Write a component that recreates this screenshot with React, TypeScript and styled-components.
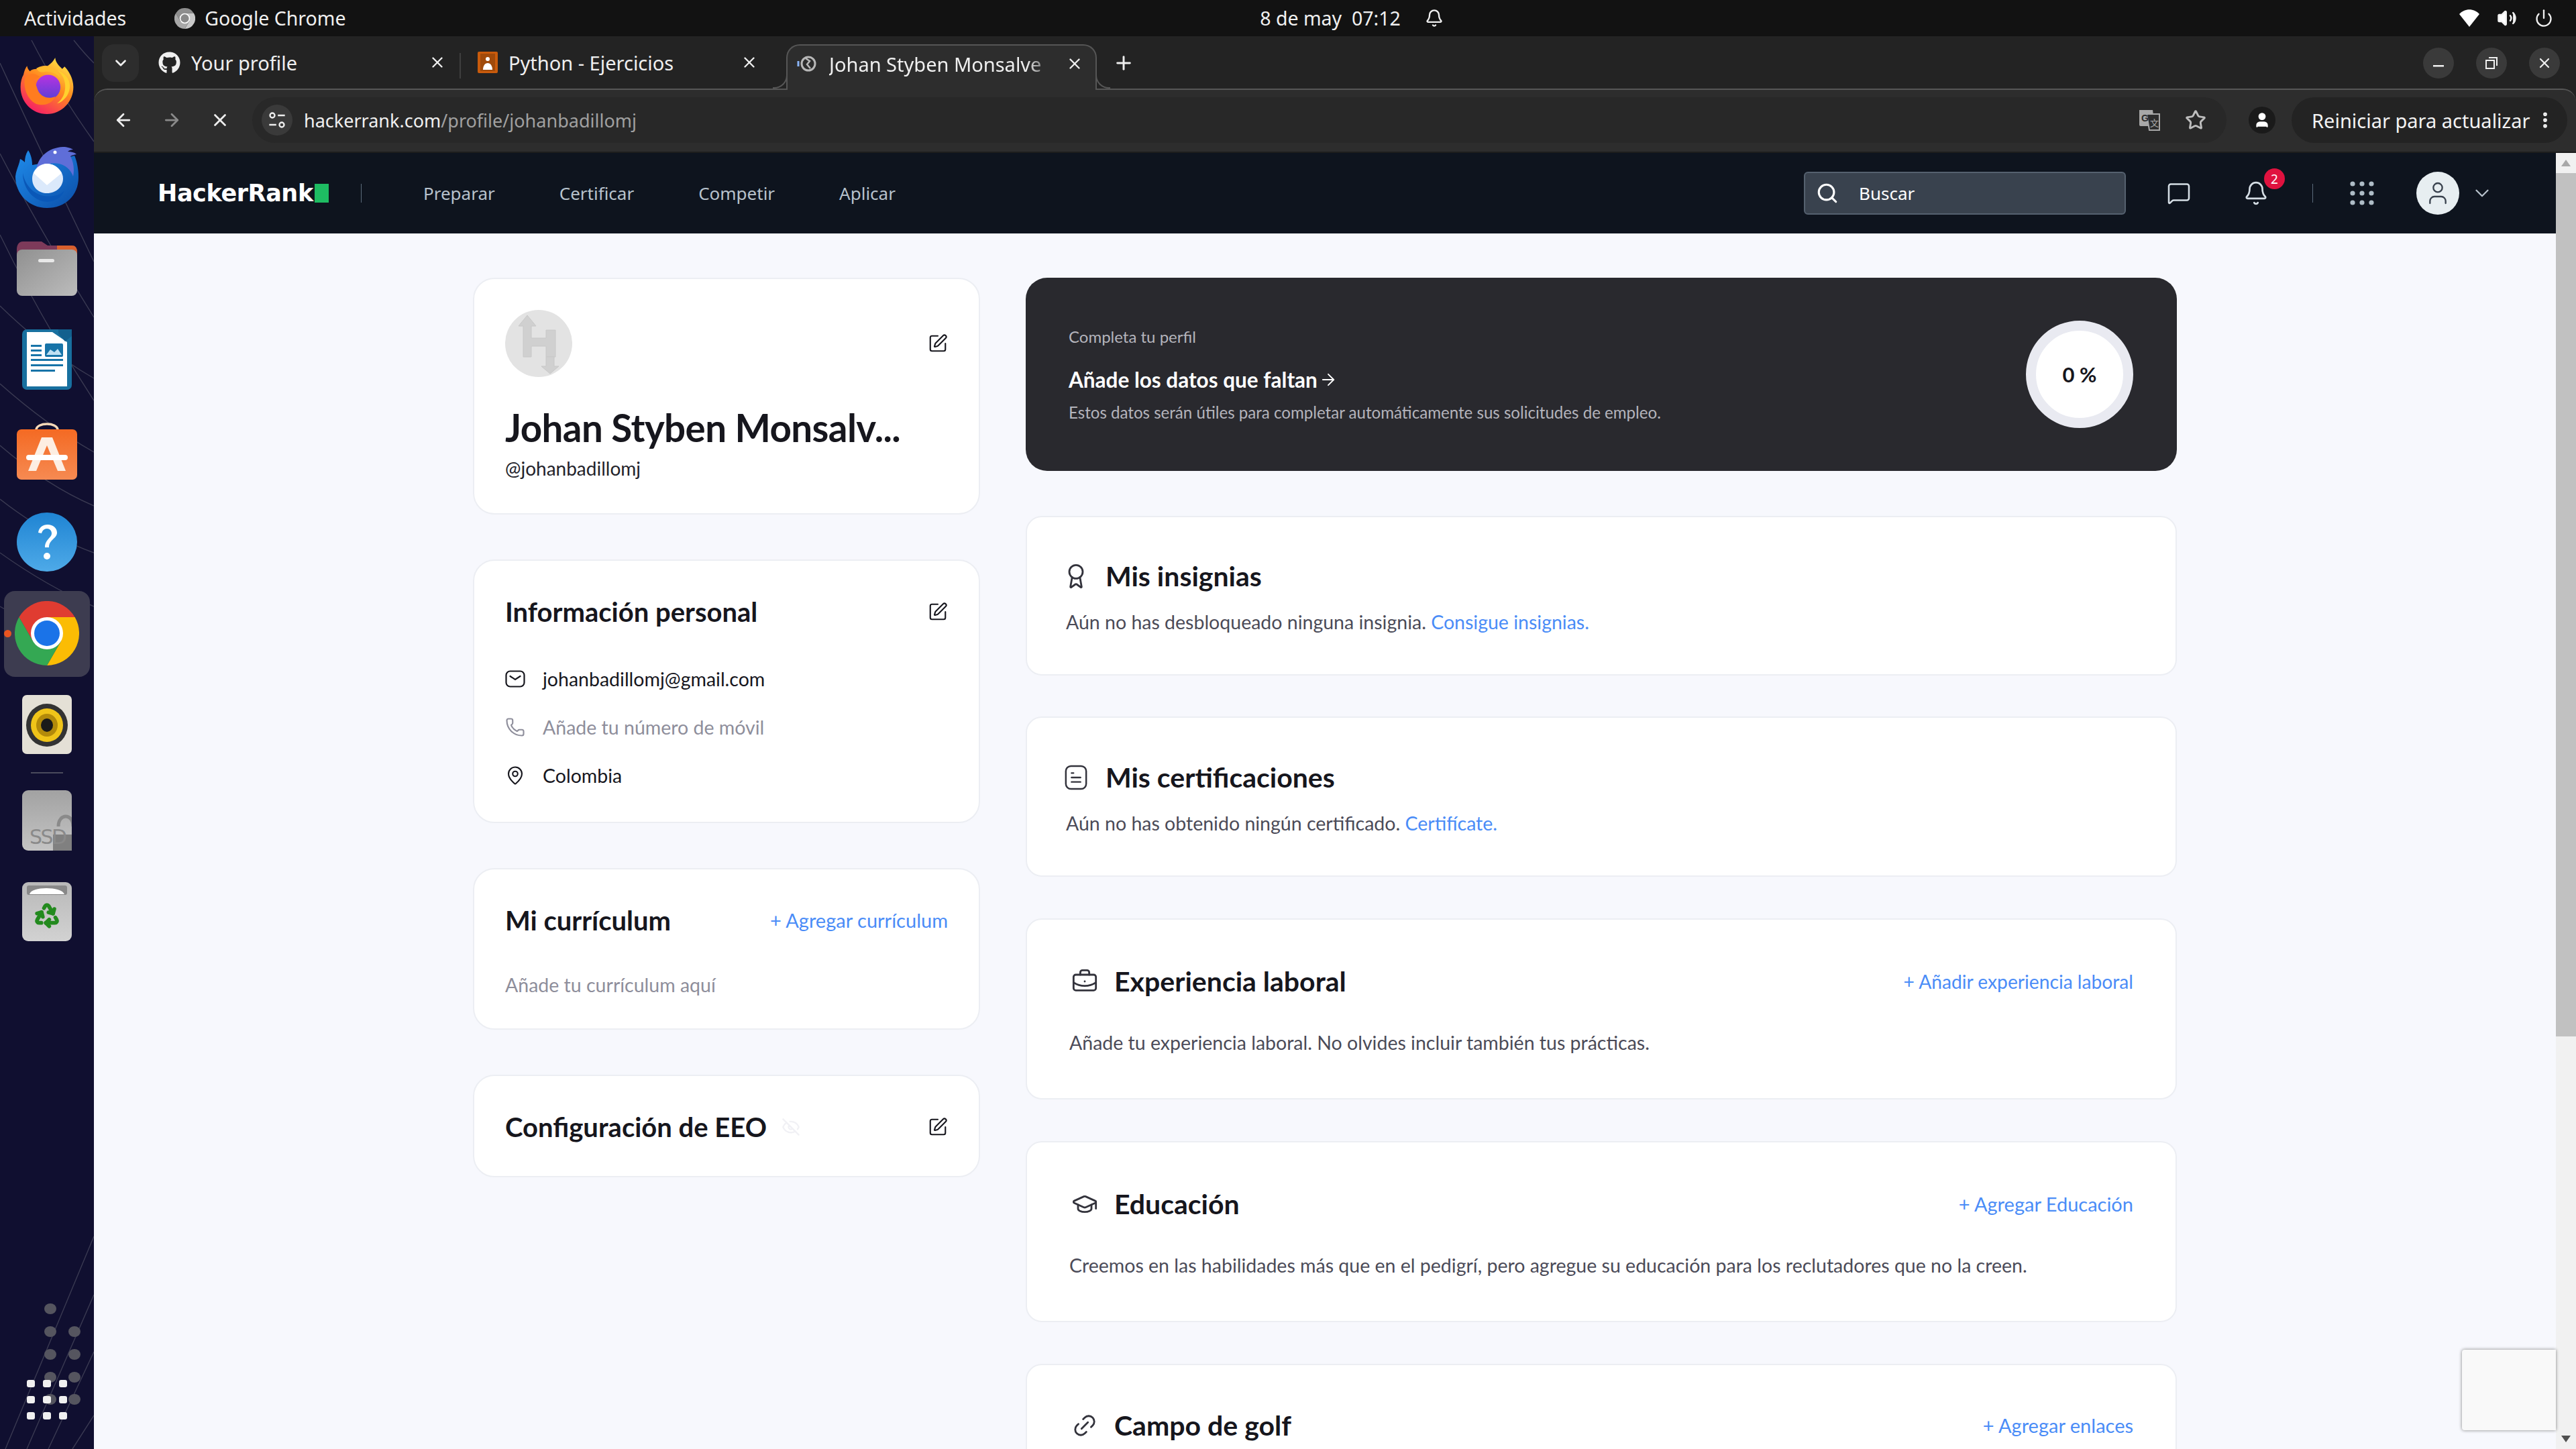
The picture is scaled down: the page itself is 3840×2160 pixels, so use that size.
import React from "react";
import styled, { createGlobalStyle } from "styled-components";
import { FaGithub } from "react-icons/fa";
import {
  ChevronDown, X, Plus, ArrowLeft, ArrowRight, Star, Volume2, Power, Search, MessageSquare, Bell,
  User, SquarePen, Phone, MapPin, Award, BriefcaseBusiness, GraduationCap, Link2, EyeOff, EllipsisVertical, Recycle,
} from "lucide-react";

const Global = createGlobalStyle`
  html, body { margin: 0; padding: 0; background: #121212; }
  * { box-sizing: border-box; }
`;

const Screen = styled.div`
  width: 3840px; height: 2160px; display: flex; flex-direction: column; overflow: hidden;
  font-family: "Noto Sans", sans-serif; position: relative;
`;
const TopBar = styled.header`
  height: 54px; flex: none; background: #121212; color: #f0f0f0; display: grid;
  grid-template-columns: 1fr auto 1fr; align-items: center; padding: 0 34px 0 36px; font-size: 28.5px;
`;
const TopLeft = styled.div`display: flex; align-items: center; gap: 72px;`;
const AppName = styled.div`display: flex; align-items: center; gap: 14px;`;
const Clock = styled.div`display: flex; align-items: center; gap: 36px; white-space: pre; margin-left: 188px;`;
const TopRight = styled.div`display: flex; justify-content: flex-end; align-items: center; gap: 26px;`;

const Body = styled.div`flex: 1; display: flex; min-height: 0;`;
const Dock = styled.nav`
  width: 140px; flex: none; background: #100f30; display: flex; flex-direction: column; align-items: center;
  padding: 6px 0 44px; position: relative; overflow: hidden;
`;
const DockItem = styled.div<{ $active?: boolean }>`
  width: 128px; height: 136px; flex: none; display: flex; align-items: center; justify-content: center; position: relative; z-index: 1;
  ${p => p.$active && `
    &::before { content: ""; position: absolute; left: 0; right: 0; top: 5px; bottom: 3px; border-radius: 16px; background: #3d3c50; }
    &::after { content: ""; position: absolute; left: 0; top: 63px; width: 11px; height: 11px; border-radius: 50%; background: #e95420; }
    & > svg { position: relative; }
  `}
`;
const DockSeparator = styled.div`width: 48px; height: 2px; flex: none; background: #4a4a5c; margin: 3px 0 2px; z-index: 1;`;
const DockGrid = styled.div`
  margin-top: auto; display: grid; grid-template-columns: repeat(3, 12px); grid-auto-rows: 11px; column-gap: 12px; row-gap: 13px; z-index: 1;
`;
const DockDot = styled.span`background: #f0f0f0; border-radius: 3px;`;
const Wallpaper = styled.svg`position: absolute; left: 0; top: 0; width: 140px; height: 2106px;`;

const Window = styled.div`flex: 1; min-width: 0; display: flex; flex-direction: column; background: #232323;`;
const TabStrip = styled.div`
  height: 78px; flex: none; display: flex; align-items: flex-end; padding-left: 12px; position: relative; z-index: 2; color: #efefef; font-size: 29px;
`;
const TabMenu = styled.div`
  width: 55px; height: 56px; background: #2d2d2d; border-radius: 18px; display: flex; align-items: center; justify-content: center; margin: 0 22px 10px 0; color: #eee;
`;
const Tab = styled.div<{ $w: number }>`
  width: ${p => p.$w}px; height: 66px; padding: 0 20px 12px 7px; display: flex; align-items: center; gap: 16px; flex: none;
`;
const TabDivider = styled.div`width: 2px; height: 38px; background: #3f3f3f; margin: 0 18px 15px 0;`;
const TabTitle = styled.span`flex: 1; white-space: nowrap; overflow: hidden;`;
const ActiveTabTitle = styled(TabTitle)`
  -webkit-mask-image: linear-gradient(to right, #000 88%, transparent 100%); mask-image: linear-gradient(to right, #000 88%, transparent 100%);
`;
const ActiveTab = styled.div`
  width: 463px; height: 68px; margin-left: 22px; flex: none; background: #2d2d2d; border: solid #565656; border-width: 2px 2px 0;
  border-radius: 20px 20px 0 0; display: flex; align-items: center; gap: 18px; padding: 0 18px 12px 12px; position: relative; margin-bottom: -2px;
  &::before, &::after { content: ""; position: absolute; bottom: 2px; width: 20px; height: 20px; border: solid #565656; border-width: 0 0 2px 0; background: #232323; }
  &::before { left: -22px; border-right-width: 2px; border-bottom-right-radius: 20px; }
  &::after { right: -22px; border-left-width: 2px; border-bottom-left-radius: 20px; }
`;
const NewTab = styled.div`margin: 0 0 22px 24px; color: #eee; display: flex;`;
const WindowControls = styled.div`margin: 0 24px 15px auto; display: flex; gap: 33px;`;
const WinButton = styled.div`
  width: 46px; height: 46px; border-radius: 50%; background: #3a3a3a; color: #f0f0f0; display: flex; align-items: center; justify-content: center;
`;
const Toolbar = styled.div`
  height: 96px; flex: none; background: #2d2d2d; border-top: 2px solid #565656; border-radius: 20px 20px 0 0; display: flex; align-items: center;
  padding: 0 13px 2px 29px; color: #eee; border-bottom: 2px solid #1d1d1d;
`;
const NavIcons = styled.div`display: flex; align-items: center; gap: 42px; margin-right: 33px;`;
const Omnibox = styled.div`
  flex: 1; height: 68px; border-radius: 34px; background: #282828; display: flex; align-items: center; padding: 0 30px 0 14px;
`;
const SiteInfo = styled.div`
  width: 46px; height: 46px; border-radius: 50%; background: #3a3a3a; display: flex; align-items: center; justify-content: center; flex: none; margin-right: 17px;
`;
const Url = styled.div`flex: 1; font-size: 27px; color: #f0f0f0;`;
const UrlRest = styled.span`color: #a0a0a0;`;
const OmniIcons = styled.div`display: flex; align-items: center; gap: 36px;`;
const ProfileChip = styled.div`
  width: 40px; height: 40px; border-radius: 50%; background: #1a1a1a; display: flex; align-items: center; justify-content: center; margin: 0 24px 0 33px; flex: none;
`;
const RestartPill = styled.div`
  width: 411px; height: 68px; flex: none; border-radius: 34px; background: #232323; display: flex; align-items: center; justify-content: space-between;
  padding: 0 18px 0 30px; font-size: 29px; color: #f2f2f2;
`;

const ContentRow = styled.div`flex: 1; min-height: 0; display: flex; position: relative;`;
const ContentMain = styled.div`flex: 1; min-width: 0; display: flex; flex-direction: column;`;
const HrNav = styled.div`
  height: 120px; flex: none; background: #0e141e; display: flex; align-items: center; padding: 0 107px 0 95px; color: #b7c2cc; font-size: 26px;
`;
const Logo = styled.div`
  display: flex; align-items: center; font-family: "DejaVu Sans", sans-serif; font-weight: 700; font-size: 35px; color: #fff; width: 303px; letter-spacing: -0.4px;
`;
const LogoMark = styled.span`width: 21px; height: 28px; background: #1ebc62; margin-left: 2px;`;
const NavDivider = styled.div`width: 1px; height: 28px; background: #5b6b7b; flex: none;`;
const NavLinks = styled.div`display: flex; margin-left: 92px; gap: 96px;`;
const SearchBox = styled.div`
  width: 480px; height: 64px; margin-left: auto; background: #39424e; border: 2px solid #55616f; border-radius: 6px; display: flex; align-items: center;
  padding: 0 0 0 16px; gap: 30px; color: #fff; font-size: 26px;
`;
const NavIconSlot = styled.div<{ $w: number; $ml?: number }>`
  width: ${p => p.$w}px; margin-left: ${p => p.$ml ?? 0}px; display: flex; justify-content: center; align-items: center; position: relative; color: #d5dee5; flex: none;
  & > svg { flex: none; }
`;
const Badge = styled.span`
  position: absolute; left: 50%; margin-left: 12px; top: -18px; width: 31px; height: 31px; border-radius: 50%; background: #e0123f; color: #fff;
  font-size: 19px; display: flex; align-items: center; justify-content: center;
`;
const NavAvatar = styled.div`
  width: 64px; height: 64px; border-radius: 50%; background: #e7eef1; color: #39424e; display: flex; align-items: center; justify-content: center;
`;

const Page = styled.main`
  flex: 1; min-height: 0; background: #f7f8fd; overflow: hidden; display: grid; grid-template-columns: 756px 1716px; column-gap: 68px;
  align-content: start; padding: 66px 0 0 565px; font-family: Lato, sans-serif; color: #16161d;
`;
const Column = styled.div`display: flex; flex-direction: column; gap: 67px;`;
const RightColumn = styled.div`display: flex; flex-direction: column;`;
const Card = styled.section<{ $h: number }>`
  height: ${p => p.$h}px; flex: none; background: #fff; border: 2px solid #eceef3; border-radius: 32px; padding: 0 46px;
`;
const AvatarRow = styled.div`display: flex; justify-content: space-between; align-items: center; padding-top: 46px;`;
const Avatar = styled.div`width: 100px; height: 100px; border-radius: 50%; background: #e3e3e3; display: flex; align-items: center; justify-content: center;`;
const Name = styled.h1`margin: 40px 0 0; font-size: 56.5px; line-height: 70px; font-weight: 700; letter-spacing: -0.6px; white-space: nowrap;`;
const Handle = styled.div`font-size: 28px; line-height: 36px; margin-top: 8px; color: #23232b;`;
const CardHead = styled.div<{ $top: number }>`display: flex; justify-content: space-between; align-items: center; padding-top: ${p => p.$top}px; height: ${p => p.$top + 48}px;`;
const CardTitle = styled.h2<{ $size?: number; $gap?: number }>`
  margin: 0; font-size: ${p => p.$size ?? 40}px; line-height: 48px; font-weight: 700; display: flex; align-items: center; gap: ${p => p.$gap ?? 22}px; white-space: nowrap;
`;
const TitleIcon = styled.span<{ $w: number }>`
  width: ${p => p.$w}px; display: flex; justify-content: center; flex: none; color: #33333c;
  & > svg { flex: none; }
`;
const InfoList = styled.div`display: flex; flex-direction: column; gap: 32px; margin-top: 56px;`;
const InfoRow = styled.div<{ $muted?: boolean }>`
  display: flex; align-items: center; gap: 26px; font-size: 28.5px; line-height: 40px; color: ${p => (p.$muted ? "#8e8e9b" : "#16161d")};
`;
const AddLink = styled.a<{ $size?: number }>`color: #4a8cf7; font-size: ${p => p.$size ?? 29}px; line-height: 40px; white-space: nowrap;`;
const Muted = styled.p`margin: 52px 0 0; font-size: 28.5px; line-height: 40px; color: #8e8e9b;`;
const EditBtn = styled.span`display: flex; color: #16161d;`;
const Banner = styled.section`
  height: 288px; flex: none; background: #29292e; border-radius: 32px; display: flex; align-items: center; justify-content: space-between;
  padding: 0 65px 0 64px; margin-bottom: 67px; color: #fff;
`;
const BannerText = styled.div`display: flex; flex-direction: column;`;
const BannerEyebrow = styled.div`font-size: 24px; line-height: 32px; color: #b4b4bc;`;
const BannerTitle = styled.div`font-size: 31.5px; line-height: 44px; font-weight: 700; margin-top: 26px; display: flex; align-items: center; gap: 2px;`;
const BannerDesc = styled.div`font-size: 24.1px; line-height: 32px; color: #b4b4bc; margin-top: 11px;`;
const Ring = styled.div`
  width: 160px; height: 160px; border-radius: 50%; background: #fff; border: 15px solid #e9eaf1; color: #16161d; display: flex; align-items: center; justify-content: center;
  font-size: 31px; font-weight: 700;
`;
const Section = styled.section<{ $h: number; $mb: number; $px: number }>`
  height: ${p => p.$h}px; margin-bottom: ${p => p.$mb}px; flex: none; background: #fff; border: 2px solid #eceef3; border-radius: 24px; padding: 0 ${p => p.$px}px;
`;
const Paragraph = styled.p<{ $mt: number }>`
  margin: ${p => p.$mt}px 0 0; font-size: 28.5px; line-height: 40px; color: #4b4b58;
`;
const InlineLink = styled.a`color: #4a8cf7;`;
const Scrollbar = styled.aside`width: 30px; flex: none; background: #f1f1f1; display: flex; flex-direction: column;`;
const ScrollUp = styled.div`height: 30px; background: #f1f1f1; display: flex; align-items: center; justify-content: center;`;
const ScrollThumb = styled.div`height: 1287px; background: #c1c1c1;`;
const ScrollDown = styled.div`margin-top: auto; height: 30px; display: flex; align-items: center; justify-content: center;`;
const Recaptcha = styled.div`
  position: absolute; right: 30px; top: 1784px; width: 140px; height: 120px; background: #f9f9f9; border-radius: 4px 0 0 4px; box-shadow: 0 0 5px #808080;
`;

const Firefox = () => (
  <svg width="84" height="88" viewBox="0 0 96 96">
    <defs>
      <linearGradient id="ffa" x1="0.8" y1="0" x2="0.2" y2="1"><stop offset="0" stopColor="#ffe847" /><stop offset="0.45" stopColor="#ff8a1f" /><stop offset="1" stopColor="#f5156c" /></linearGradient>
      <linearGradient id="ffb" x1="0.5" y1="0" x2="0.5" y2="1"><stop offset="0" stopColor="#b833e1" /><stop offset="1" stopColor="#5b3fd6" /></linearGradient>
    </defs>
    <path d="M62 0c1 9 6 13 12 19l4-4c7 7 15 20 15 35 0 25-20 46-45 46S3 76 3 50c0-9 2-16 5-21 1-5 3-11 6-15 1 5 3 7 5 9 3-3 7-4 11-4 4-4 12-6 19-5C54 11 58 7 62 0z" fill="url(#ffa)" />
    <circle cx="50" cy="50" r="21" fill="url(#ffb)" />
    <path d="M10 36c4-6 10-9 16-8 4 0 6 3 10 4-4 3-6 5-14 4 6 4 8 12 10 18 4 12 18 18 30 12-4 12-20 18-34 12C14 70 8 52 10 36z" fill="#ff7c1f" />
    <path d="M30 18c8-4 22-4 32 3 4 3 8 8 9 14-6-8-16-12-26-11-6 1-10 2-15-6z" fill="#ffbd2e" opacity=".9" />
    <path d="M66 22c8 6 14 16 13 30-1 12-6 20-14 26 10-2 22-14 22-30 0-12-9-22-21-26z" fill="#ffd02e" />
  </svg>
);
const Thunderbird = () => (
  <svg width="96" height="92" viewBox="0 0 96 92">
    <defs><linearGradient id="tb" x1="0" y1="0" x2="1" y2="1"><stop offset="0" stopColor="#1f8ceb" /><stop offset="1" stopColor="#0b4ea8" /></linearGradient></defs>
    <path d="M26 28c0-8-2-16-6-22-4 6-5 12-5 18-2-2-4-4-7-5-1 8-6 16-7 26 0 26 20 47 47 47s47-18 47-46c0-16-4-28-6-32L60 22 26 28z" fill="url(#tb)" />
    <path d="M32 36C34 16 50 2 72 1c6 0 12 2 15 4-3 0-6 1-8 3 5 0 10 1 13 4-4 1-6 1-9 3 5 9 6 20 4 30C80 24 52 18 32 36z" fill="#5f6ed8" />
    <circle cx="60" cy="9" r="2.5" fill="#fff" />
    <path d="M26 48c0-12 10-22 22-22s24 10 24 22-10 22-24 22c-12 0-22-8-22-22z" fill="#dbe9fb" />
    <path d="M28 40l20 18 22-18c-6-10-14-14-22-14s-16 6-20 14z" fill="#fff" />
    <path d="M12 40c4 22 22 38 46 34 8-1 12-4 16-8-6 16-26 20-38 14C22 74 12 58 12 40z" fill="#0a58b8" />
  </svg>
);
const Files = () => (
  <svg width="90" height="81" viewBox="0 0 90 81">
    <defs><linearGradient id="fg" x1="0" y1="0" x2="1" y2="1"><stop offset="0" stopColor="#909090" /><stop offset="1" stopColor="#bcbcbc" /></linearGradient></defs>
    <path d="M0 12C0 5 3 0 9 0h28l9 6h36c5 0 8 3 8 10v20H0z" fill="#7d3a5a" />
    <path d="M60 6h22c5 0 8 3 8 10v6H60z" fill="#d9602e" />
    <rect x="0" y="12" width="90" height="69" rx="8" fill="url(#fg)" />
    <rect x="32" y="26" width="24" height="5" rx="2.5" fill="#e8e8e8" />
  </svg>
);
const Writer = () => (
  <svg width="74" height="90" viewBox="0 0 74 90">
    <rect width="74" height="90" rx="7" fill="#18709f" />
    <path d="M7 4h38l22 15v66H7z" fill="#fff" />
    <path d="M54 0h20v10L64 18 54 6z" fill="#12608e" />
    <path d="M13 23h16v3H13zM13 30h16v3H13zM13 37h16v3H13zM13 44h48v3H13zM13 52h48v3H13zM13 60h36v3H13z" fill="#1774a8" />
    <rect x="34" y="21" width="27" height="20" rx="2" fill="#1774a8" />
    <path d="M36 38l6-8 6 4 5-5 6 9z" fill="#bfe0f2" />
  </svg>
);
const AppCenter = () => (
  <svg width="90" height="88" viewBox="0 0 90 88">
    <defs><linearGradient id="ac" x1="0" y1="0" x2="0" y2="1"><stop offset="0" stopColor="#f46a23" /><stop offset="1" stopColor="#f68a52" /></linearGradient></defs>
    <path d="M29 13C29 1 61 1 61 13" fill="none" stroke="#f6d9b8" strokeWidth="3.5" />
    <rect y="12" width="90" height="75" rx="7" fill="url(#ac)" />
    <path d="M37 24h16l20 50H61L45 36 29 74H17z" fill="#fdeee2" />
    <rect x="14" y="50" width="62" height="8" rx="4" fill="#fff" />
  </svg>
);
const HelpIcon = () => (
  <svg width="90" height="88" viewBox="0 0 90 88">
    <defs><linearGradient id="hp" x1="0" y1="0" x2="0" y2="1"><stop offset="0" stopColor="#1f84d3" /><stop offset="1" stopColor="#4eaae8" /></linearGradient></defs>
    <ellipse cx="45" cy="44" rx="45" ry="44" fill="url(#hp)" />
    <path d="M32 30c1-8 7-12 14-12 8 0 14 5 14 12 0 9-12 10-12 22h-6c0-12 10-14 10-21 0-4-3-7-7-7-4 0-7 3-8 7z" fill="#fff" />
    <circle cx="45" cy="65" r="5" fill="#fff" />
  </svg>
);
const Chrome = ({ size = 96, grey = false }: { size?: number; grey?: boolean }) => (
  <svg width={size} height={size} viewBox="0 0 96 96">
    <path d="M6.4 24A48 48 0 0 1 89.6 24L48 24 27.2 60z" fill={grey ? "#8e8e8e" : "#e03c31"} />
    <path d="M89.6 24A48 48 0 0 1 48 96L68.8 60 48 24z" fill={grey ? "#c8c8c8" : "#fbbc04"} />
    <path d="M48 96A48 48 0 0 1 6.4 24L27.2 60 68.8 60z" fill={grey ? "#a8a8a8" : "#34a853"} />
    <circle cx="48" cy="48" r="24" fill="#fff" />
    <circle cx="48" cy="48" r="19" fill={grey ? "#8a8a8a" : "#1a73e8"} />
  </svg>
);
const Rhythmbox = () => (
  <svg width="74" height="88" viewBox="0 0 74 88">
    <rect width="74" height="88" rx="7" fill="#e4e0d6" />
    <ellipse cx="37" cy="45" rx="31" ry="32" fill="#333" />
    <ellipse cx="37" cy="45" rx="24" ry="25" fill="#f0c419" />
    <ellipse cx="37" cy="45" rx="16" ry="17" fill="#b38a0a" />
    <ellipse cx="37" cy="45" rx="9" ry="10" fill="#1a1a1a" />
  </svg>
);
const Ssd = () => (
  <svg width="74" height="90" viewBox="0 0 74 90">
    <defs><linearGradient id="sd" x1="0" y1="0" x2="0" y2="1"><stop offset="0" stopColor="#a2a2a2" /><stop offset="1" stopColor="#c4c4c4" /></linearGradient></defs>
    <rect width="74" height="90" rx="9" fill="url(#sd)" />
    <path d="M54 54c0-20 22-20 22 0" fill="none" stroke="#8a8a8a" strokeWidth="5" />
    <rect x="46" y="66" width="30" height="24" fill="#808080" />
    <text x="11" y="80" fontFamily="DejaVu Sans" fontSize="30" fill="#8a8a8a" textLength="56">SSD</text>
  </svg>
);
const Trash = () => (
  <svg width="74" height="88" viewBox="0 0 74 88">
    <defs><linearGradient id="tr" x1="0" y1="0" x2="0" y2="1"><stop offset="0" stopColor="#b8b8b8" /><stop offset="1" stopColor="#d2d2d2" /></linearGradient></defs>
    <rect width="74" height="88" rx="9" fill="url(#tr)" />
    <rect x="7" y="5" width="60" height="14" rx="3" fill="#888" />
    <path d="M11 18c2-12 48-12 52 0z" fill="#fff" />
    <Recycle x={17} y={26} width={40} height={46} stroke="#238a1e" strokeWidth={3.4} />
  </svg>
);
const SiteTune = () => (
  <svg width="28" height="28" viewBox="0 0 24 24" fill="none" stroke="#eee" strokeWidth="2">
    <circle cx="6" cy="6" r="3" /><path d="M13 6h9M2 18h9" /><circle cx="18" cy="18" r="3" />
  </svg>
);
const Translate = () => (
  <svg width="34" height="34" viewBox="0 0 34 34">
    <path d="M2 2h20l3 24H4a2 2 0 0 1-2-2z" fill="#a8a8a8" />
    <path d="M13 8h19v24H17z" fill="#2d2d2d" stroke="#a8a8a8" strokeWidth="2" />
    <text x="5" y="19" fontFamily="Liberation Sans" fontWeight="700" fontSize="14" fill="#2d2d2d">G</text>
    <text x="18" y="26" fontFamily="Noto Sans CJK SC" fontSize="13" fill="#a8a8a8">文</text>
  </svg>
);
const Pawn = () => (
  <svg width="30" height="32" viewBox="0 0 30 32">
    <rect width="30" height="32" rx="2" fill="#c95b0c" />
    <rect x="4" y="3" width="22" height="26" fill="#a04a0a" />
    <circle cx="15" cy="11" r="3" fill="#fff" />
    <path d="M8 27c0-6 3-10 7-10s7 4 7 10z" fill="#fff" />
  </svg>
);
const LoadingFavicon = () => (
  <svg width="32" height="32" viewBox="0 0 32 32" fill="none" stroke="#b8b8b8" strokeWidth="3">
    <path d="M4 12v8" stroke="#8ab4f8" />
    <circle cx="19" cy="16" r="10" />
    <path d="M15 8l6 4-4 5 5 6" strokeWidth="2.5" />
  </svg>
);
const WifiIcon = () => (
  <svg width="30" height="26" viewBox="0 0 30 26"><path d="M0 7C8-2 22-2 30 7L15 26z" fill="#fff" /></svg>
);
const RestoreIcon = () => (
  <svg width="20" height="20" viewBox="0 0 20 20" fill="none" stroke="#f0f0f0" strokeWidth="2">
    <rect x="2" y="6" width="12" height="12" /><path d="M6 2h12v12" />
  </svg>
);
const Minimize = () => (
  <svg width="16" height="16" viewBox="0 0 16 16"><rect y="11" width="16" height="2.5" fill="#f0f0f0" /></svg>
);
const MailIcon = () => (
  <svg width="30" height="28" viewBox="0 0 30 28" fill="none" stroke="currentColor" strokeWidth="2.2" strokeLinecap="round">
    <rect x="1.5" y="2.5" width="27" height="23" rx="6" /><path d="M7.5 10l7.5 5 7.5-5" />
  </svg>
);
const CertIcon = () => (
  <svg width="36" height="40" viewBox="0 0 38 40" fill="none" stroke="#33333c" strokeWidth="2.6" strokeLinecap="round">
    <rect x="3" y="2" width="32" height="36" rx="8" /><path d="M12 13h3M12 20h14M12 27h14" />
  </svg>
);
const AvatarMark = () => (
  <svg width="62" height="92" viewBox="0 0 62 92" fill="#d0d0d0" stroke="#c8c8c8">
    <path d="M8 66V20H1L14 4l13 16h-7v18h22V26h14v40H42V50H20v16z" />
    <path d="M42 66v14h-7l13 11 13-11h-7V66z" />
  </svg>
);
const GreyDots = () => (
  <>
    {[[75, 1951], [75, 1985], [75, 2019], [75, 2053], [75, 2086], [111, 1985], [111, 2019], [111, 2053], [111, 2086]].map(([x, y]) => (
      <ellipse key={`${x}-${y}`} cx={x} cy={y - 54} rx="9" ry="8" fill="#55555f" />
    ))}
  </>
);

const iconStroke = 1.7;

export default function App() {
  return (
    <Screen>
      <Global />
      <TopBar>
        <TopLeft>
          <span>Actividades</span>
          <AppName><Chrome size={31} grey />Google Chrome</AppName>
        </TopLeft>
        <Clock>
          <span>8 de may  07:12</span>
          <Bell size={28} strokeWidth={2} />
        </Clock>
        <TopRight>
          <WifiIcon />
          <Volume2 size={30} fill="#fff" />
          <Power size={28} />
        </TopRight>
      </TopBar>
      <Body>
        <Dock>
          <Wallpaper viewBox="0 0 140 2106" fill="none" stroke="#3a3a52" strokeWidth="1.4">
            <path d="M47 6Q85 80 140 157M110 6Q125 25 140 40M0 40Q60 170 140 336M0 175Q60 290 140 419M0 296Q60 420 140 543M0 402Q70 470 140 510M0 518Q70 580 140 620M0 610Q70 670 140 700M0 690Q70 745 140 770M0 770Q70 820 140 850M0 850Q50 880 100 895" />
            <path d="M8 2106L140 1789M40 2106L140 1876M72 2106L140 1961M108 2106L140 2056" />
            <g stroke="none"><GreyDots /></g>
          </Wallpaper>
          <DockItem><Firefox /></DockItem>
          <DockItem><Thunderbird /></DockItem>
          <DockItem><Files /></DockItem>
          <DockItem><Writer /></DockItem>
          <DockItem><AppCenter /></DockItem>
          <DockItem><HelpIcon /></DockItem>
          <DockItem $active><Chrome size={96} /></DockItem>
          <DockItem><Rhythmbox /></DockItem>
          <DockSeparator />
          <DockItem><Ssd /></DockItem>
          <DockItem><Trash /></DockItem>
          <DockGrid>
            {Array.from({ length: 9 }, (_, i) => <DockDot key={i} />)}
          </DockGrid>
        </Dock>
        <Window>
          <TabStrip>
            <TabMenu><ChevronDown size={26} strokeWidth={2.5} /></TabMenu>
            <Tab $w={456}>
              <FaGithub size={33} />
              <TabTitle>Your profile</TabTitle>
              <X size={26} strokeWidth={2.2} />
            </Tab>
            <TabDivider />
            <Tab $w={445}>
              <Pawn />
              <TabTitle>Python - Ejercicios</TabTitle>
              <X size={26} strokeWidth={2.2} />
            </Tab>
            <ActiveTab>
              <LoadingFavicon />
              <ActiveTabTitle>Johan Styben Monsalve</ActiveTabTitle>
              <X size={26} strokeWidth={2.2} />
            </ActiveTab>
            <NewTab><Plus size={32} strokeWidth={2.2} /></NewTab>
            <WindowControls>
              <WinButton><Minimize /></WinButton>
              <WinButton><RestoreIcon /></WinButton>
              <WinButton><X size={24} strokeWidth={2.2} /></WinButton>
            </WindowControls>
          </TabStrip>
          <Toolbar>
            <NavIcons>
              <ArrowLeft size={30} strokeWidth={2.2} />
              <ArrowRight size={30} strokeWidth={2.2} color="#8a8a8a" />
              <X size={30} strokeWidth={2.2} />
            </NavIcons>
            <Omnibox>
              <SiteInfo><SiteTune /></SiteInfo>
              <Url>hackerrank.com<UrlRest>/profile/johanbadillomj</UrlRest></Url>
              <OmniIcons>
                <Translate />
                <Star size={32} strokeWidth={2.2} color="#bdbdbd" />
              </OmniIcons>
            </Omnibox>
            <ProfileChip><User size={26} fill="#fff" color="#fff" /></ProfileChip>
            <RestartPill>Reiniciar para actualizar<EllipsisVertical size={30} strokeWidth={2.6} /></RestartPill>
          </Toolbar>
          <ContentRow>
            <ContentMain>
              <HrNav>
                <Logo>HackerRank<LogoMark /></Logo>
                <NavDivider />
                <NavLinks>
                  <span>Preparar</span><span>Certificar</span><span>Competir</span><span>Aplicar</span>
                </NavLinks>
                <SearchBox><Search size={34} strokeWidth={2.2} />Buscar</SearchBox>
                <NavIconSlot $w={158}><MessageSquare size={36} strokeWidth={1.7} /></NavIconSlot>
                <NavIconSlot $w={72}>
                  <Bell size={38} strokeWidth={1.7} />
                  <Badge>2</Badge>
                </NavIconSlot>
                <NavIconSlot $w={96}><NavDivider /></NavIconSlot>
                <NavIconSlot $w={52}>
                  <svg width="36" height="36" viewBox="0 0 36 36" fill="#aebcc6">
                    {[4, 18, 32].flatMap(y => [4, 18, 32].map(x => <circle key={`${x}${y}`} cx={x} cy={y} r="3.6" />))}
                  </svg>
                </NavIconSlot>
                <NavIconSlot $w={126} $ml={24}><NavAvatar><User size={40} strokeWidth={1.4} /></NavAvatar></NavIconSlot>
                <NavIconSlot $w={6}><ChevronDown size={34} strokeWidth={1.6} color="#b7c2cc" /></NavIconSlot>
              </HrNav>
              <Page>
                <Column>
                  <Card $h={353}>
                    <AvatarRow>
                      <Avatar><AvatarMark /></Avatar>
                      <EditBtn><SquarePen size={30} strokeWidth={iconStroke} /></EditBtn>
                    </AvatarRow>
                    <Name>Johan Styben Monsalv...</Name>
                    <Handle>@johanbadillomj</Handle>
                  </Card>
                  <Card $h={393}>
                    <CardHead $top={52}>
                      <CardTitle>Información personal</CardTitle>
                      <EditBtn><SquarePen size={30} strokeWidth={iconStroke} /></EditBtn>
                    </CardHead>
                    <InfoList>
                      <InfoRow><MailIcon />johanbadillomj@gmail.com</InfoRow>
                      <InfoRow $muted><Phone size={30} strokeWidth={iconStroke} />Añade tu número de móvil</InfoRow>
                      <InfoRow><MapPin size={30} strokeWidth={iconStroke} />Colombia</InfoRow>
                    </InfoList>
                  </Card>
                  <Card $h={241}>
                    <CardHead $top={52}>
                      <CardTitle>Mi currículum</CardTitle>
                      <AddLink>+ Agregar currículum</AddLink>
                    </CardHead>
                    <Muted>Añade tu currículum aquí</Muted>
                  </Card>
                  <Card $h={153}>
                    <CardHead $top={52}>
                      <CardTitle>Configuración de EEO<EyeOff size={28} color="#f1f1f5" /></CardTitle>
                      <EditBtn><SquarePen size={30} strokeWidth={iconStroke} /></EditBtn>
                    </CardHead>
                  </Card>
                </Column>
                <RightColumn>
                  <Banner>
                    <BannerText>
                      <BannerEyebrow>Completa tu perfil</BannerEyebrow>
                      <BannerTitle>Añade los datos que faltan<ArrowRight size={28} strokeWidth={1.6} /></BannerTitle>
                      <BannerDesc>Estos datos serán útiles para completar automáticamente sus solicitudes de empleo.</BannerDesc>
                    </BannerText>
                    <Ring>0 %</Ring>
                  </Banner>
                  <Section $h={238} $mb={61} $px={58}>
                    <CardHead $top={64}>
                      <CardTitle $size={41} $gap={29}><TitleIcon $w={30}><Award size={40} strokeWidth={iconStroke} /></TitleIcon>Mis insignias</CardTitle>
                    </CardHead>
                    <Paragraph $mt={24}>Aún no has desbloqueado ninguna insignia. <InlineLink>Consigue insignias.</InlineLink></Paragraph>
                  </Section>
                  <Section $h={239} $mb={62} $px={58}>
                    <CardHead $top={65}>
                      <CardTitle $size={41} $gap={29}><TitleIcon $w={30}><CertIcon /></TitleIcon>Mis certificaciones</CardTitle>
                    </CardHead>
                    <Paragraph $mt={24}>Aún no has obtenido ningún certificado. <InlineLink>Certifícate.</InlineLink></Paragraph>
                  </Section>
                  <Section $h={270} $mb={62} $px={63}>
                    <CardHead $top={68}>
                      <CardTitle $size={41} $gap={21}><TitleIcon $w={46}><BriefcaseBusiness size={40} strokeWidth={iconStroke} /></TitleIcon>Experiencia laboral</CardTitle>
                      <AddLink $size={28.2}>+ Añadir experiencia laboral</AddLink>
                    </CardHead>
                    <Paragraph $mt={47}>Añade tu experiencia laboral. No olvides incluir también tus prácticas.</Paragraph>
                  </Section>
                  <Section $h={270} $mb={62} $px={63}>
                    <CardHead $top={68}>
                      <CardTitle $size={41} $gap={21}><TitleIcon $w={46}><GraduationCap size={40} strokeWidth={iconStroke} /></TitleIcon>Educación</CardTitle>
                      <AddLink>+ Agregar Educación</AddLink>
                    </CardHead>
                    <Paragraph $mt={47}>Creemos en las habilidades más que en el pedigrí, pero agregue su educación para los reclutadores que no la creen.</Paragraph>
                  </Section>
                  <Section $h={270} $mb={0} $px={63}>
                    <CardHead $top={66}>
                      <CardTitle $size={41} $gap={21}><TitleIcon $w={46}><Link2 size={40} strokeWidth={iconStroke} style={{ transform: "rotate(-45deg)" }} /></TitleIcon>Campo de golf</CardTitle>
                      <AddLink>+ Agregar enlaces</AddLink>
                    </CardHead>
                  </Section>
                </RightColumn>
              </Page>
            </ContentMain>
            <Recaptcha />
            <Scrollbar>
              <ScrollUp><svg width="14" height="10" viewBox="0 0 14 10"><path d="M7 0l7 10H0z" fill="#a8a8a8" /></svg></ScrollUp>
              <ScrollThumb />
              <ScrollDown><svg width="14" height="10" viewBox="0 0 14 10"><path d="M7 10l7-10H0z" fill="#505050" /></svg></ScrollDown>
            </Scrollbar>
          </ContentRow>
        </Window>
      </Body>
    </Screen>
  );
}
